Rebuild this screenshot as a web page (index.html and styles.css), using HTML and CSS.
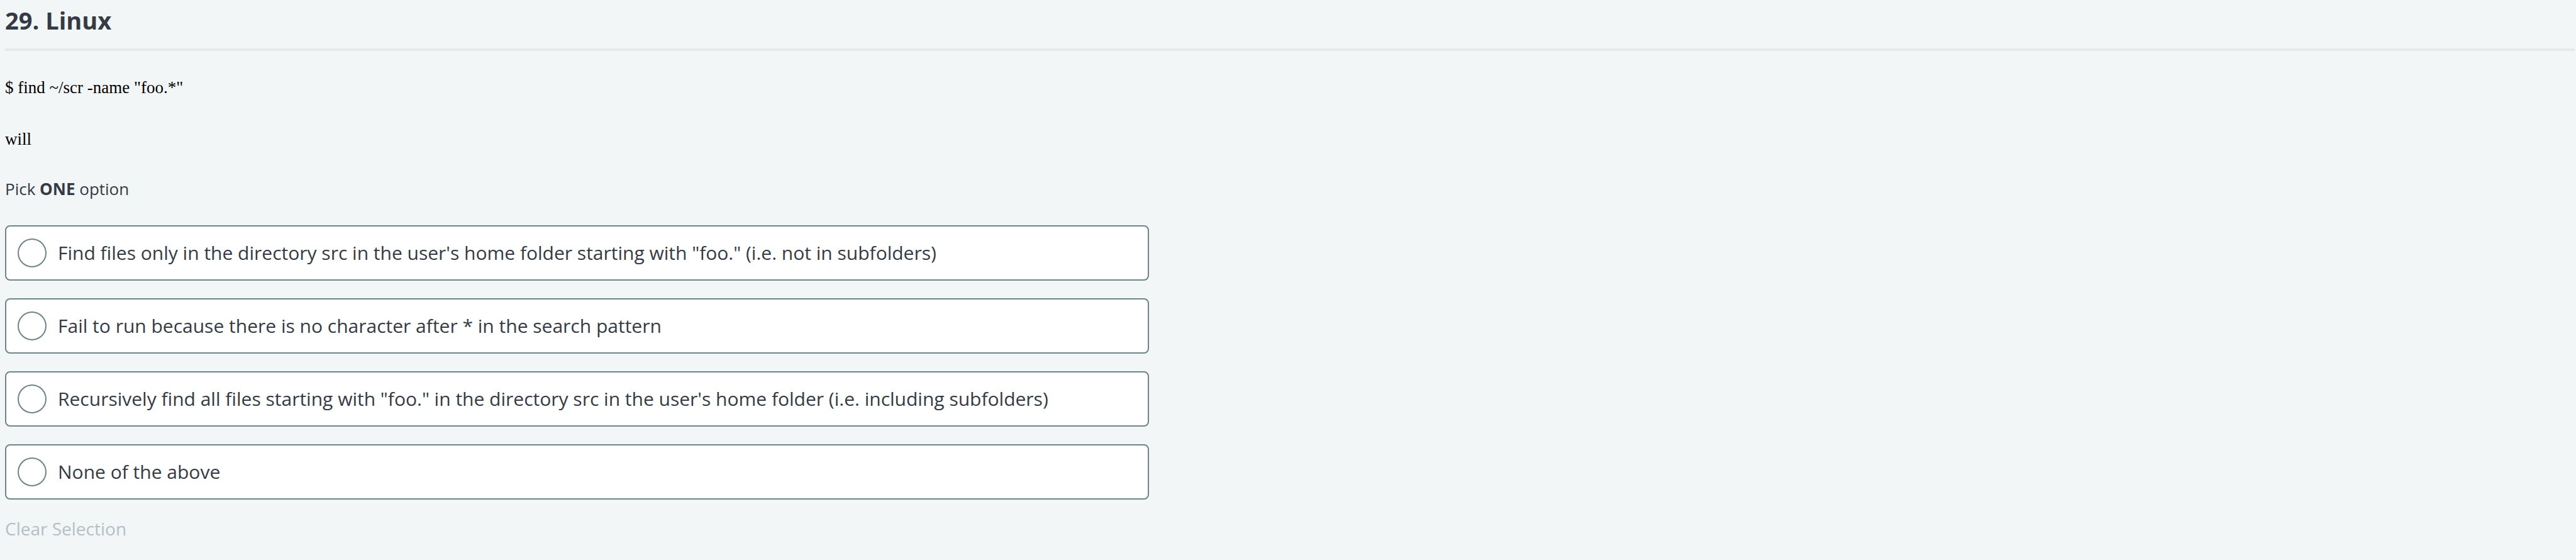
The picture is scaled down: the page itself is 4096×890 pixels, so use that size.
FILE: index.html
```html
<!DOCTYPE html>
<html lang="en">
<head>
<meta charset="utf-8">
<title>29. Linux</title>
<link rel="stylesheet" href="styles.css">
</head>
<body>
<main class="question">
<h1 class="title">29. Linux</h1>
<div class="prompt">
<p>$ find ~/scr -name "foo.*"</p>
<p>will</p>
</div>
<form class="answers">
<p class="hint" id="hint">Pick <strong>ONE</strong> option</p>
<div class="options" role="radiogroup" aria-labelledby="hint">
<label class="option"><input type="radio" name="answer"><span>Find files only in the directory src in the user's home folder starting with "foo." (i.e. not in subfolders)</span></label>
<label class="option"><input type="radio" name="answer"><span>Fail to run because there is no character after * in the search pattern</span></label>
<label class="option"><input type="radio" name="answer"><span>Recursively find all files starting with "foo." in the directory src in the user's home folder (i.e. including subfolders)</span></label>
<label class="option"><input type="radio" name="answer"><span>None of the above</span></label>
</div>
<button class="clear" type="reset">Clear Selection</button>
</form>
</main>
</body>
</html>
```
FILE: styles.css
```css
* { box-sizing: border-box; }
body { margin: 0; background: #f2f6f7; color: #343a46; font-family: "Open Sans", sans-serif; }
.question { padding: 0 2px 0 8px; }
.title { margin: 0; padding: 7px 0 20px; border-bottom: 4px solid #e5e9ea; font-size: 38px; line-height: 50px; }
.prompt { display: grid; gap: 42px; padding: 38px 0 41px; color: #000; font-family: "Liberation Serif", serif; font-size: 27px; line-height: 40px; }
.prompt p { margin: 0; }
.hint { margin: 0; font-size: 26px; line-height: 36px; }
.options { display: grid; gap: 28px; max-width: 1819px; margin-top: 40px; }
.option { display: flex; align-items: center; gap: 18px; min-height: 88px; padding: 0 18px; border: 2px solid #6f8488; border-radius: 8px; background: #fff; font-size: 30px; line-height: 40px; cursor: pointer; }
.option input { appearance: none; flex: none; width: 46px; height: 46px; margin: 0; border: 2px solid #6f8488; border-radius: 50%; background: #fff; }
.option input:checked { border: 12px solid #343a46; }
.clear { display: block; margin: 26px 0 0; padding: 0; border: 0; background: none; color: #b3c1c5; font: 28px/40px "Open Sans", sans-serif; }
```
